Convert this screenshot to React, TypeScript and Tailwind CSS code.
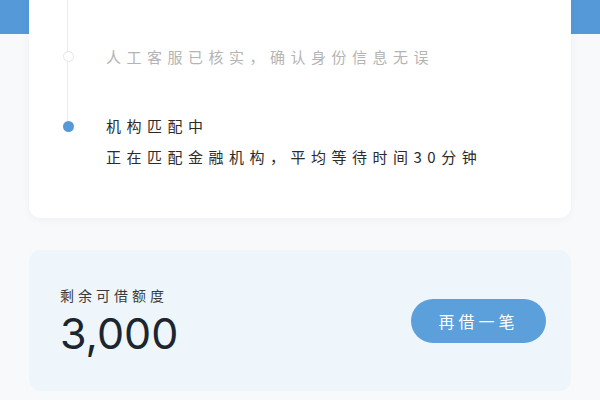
import React from 'react';

const cjk = { fontFamily: '"Noto Sans CJK SC", "Noto Sans", sans-serif' };

interface Step {
  title?: string;
  desc: string;
  active: boolean;
}

const steps: Step[] = [
  { desc: '提交资料已完成审核', active: false },
  { desc: '人工客服已核实，确认身份信息无误', active: false },
  { title: '机构匹配中', desc: '正在匹配金融机构，平均等待时间30分钟', active: true },
];

function Timeline() {
  return (
    <div className="relative pl-[39px]">
      <div className="absolute left-[38px] top-0 h-[154px] w-px bg-[#ededed]" />
      <div className="flex flex-col">
        {steps.map((s, i) => (
          <div key={i} className={`flex items-start ${i === 0 ? 'h-[73px]' : i === 1 ? 'h-[68px]' : ''}`}>
            <div className="relative flex w-0 justify-center">
              {s.active ? (
                <span className="absolute top-[7px] h-[11px] w-[11px] rounded-full bg-[#5699d6]" />
              ) : (
                <span className="absolute top-[5px] h-[11px] w-[11px] rounded-full border border-[#e6e6e6] bg-white" />
              )}
            </div>
            <div className="ml-[38px]" style={cjk}>
              {s.title && (
                <p className="text-[15px] leading-[24px] tracking-[5.5px] text-[#2b2b2b]">{s.title}</p>
              )}
              <p
                className={`text-[15px] leading-[22px] tracking-[5.5px] ${
                  s.active ? 'mt-[8px] text-[#2b2b2b]' : 'text-[#b4b4b4]'
                }`}
              >
                {s.desc}
              </p>
            </div>
          </div>
        ))}
      </div>
    </div>
  );
}

export default function App() {
  return (
    <div className="relative h-[400px] w-[600px] overflow-hidden bg-[#f8f9fb]">
      <div className="absolute left-0 top-0 h-[34px] w-full bg-[#5599d8]" />
      <div className="relative flex flex-col gap-[32px] px-[29px]">
        <div className="mt-[-40px] h-[258px] rounded-[12px] bg-white pt-[13px] shadow-[0_2px_8px_rgba(0,0,0,0.04)]">
          <Timeline />
        </div>
        <div className="flex h-[141px] items-center justify-between rounded-[12px] bg-[#eef6fc] pl-[31px] pr-[25px]">
          <div>
            <p className="text-[14px] leading-[20px] tracking-[4px] text-[#3a3a3a]" style={cjk}>
              剩余可借额度
            </p>
            <p
              className="mt-[4px] text-[43px] leading-[48px] text-[#1c2630]"
              style={{ fontFamily: 'Inter, "Noto Sans", sans-serif', fontWeight: 400 }}
            >
              3,000
            </p>
          </div>
          <button
            className="h-[44px] w-[135px] rounded-full bg-[#5b9fdb] text-[16px] tracking-[4px] text-white"
            style={cjk}
          >
            再借一笔
          </button>
        </div>
      </div>
    </div>
  );
}
